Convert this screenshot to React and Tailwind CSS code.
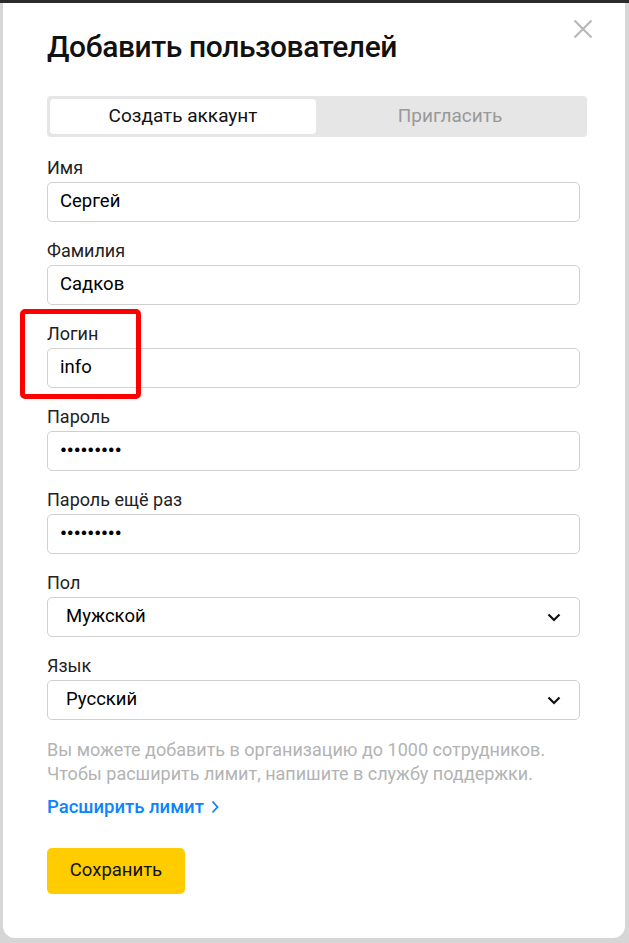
const font = { fontFamily: 'Roboto, "Noto Sans", sans-serif' }

function Field({ label, value, password }) {
    return (
        <div className="mt-[17px] first:mt-0">
            <div className="text-[18px] leading-6 text-[#222] mb-[2px]">{label}</div>
            <div className="h-10 border border-[#d0d0d0] rounded-[5px] flex items-center px-[12px] text-[18.5px] text-black">
                {password ? <span className="text-[19px] font-bold">{value}</span> : value}
            </div>
        </div>
    )
}

function Select({ label, value }) {
    return (
        <div className="mt-[17px]">
            <div className="text-[18px] leading-6 text-[#222] mb-[2px]">{label}</div>
            <div className="h-10 border border-[#d0d0d0] rounded-[5px] flex items-center justify-between pl-[18px] pr-[18px] text-[18.5px] text-black">
                <span>{value}</span>
                <svg width="14" height="9" viewBox="0 0 14 9" fill="none">
                    <path d="M1.5 1.5 L7 7 L12.5 1.5" stroke="#111" strokeWidth="2.2" />
                </svg>
            </div>
        </div>
    )
}

export default function App() {
    return (
        <div className="min-h-[943px] bg-[#d6d6d6] flex flex-col" style={font}>
            <div className="h-[3px] bg-[#2b2b2b]" />
            <div className="relative ml-[3px] mr-[4px] h-[935px] bg-white rounded-b-[12px] pl-[44px] pr-[38px]">
                <button className="absolute right-[32px] top-[16px]">
                    <svg width="20" height="20" viewBox="0 0 20 20" fill="none">
                        <path d="M1.5 1.5 L18.5 18.5 M18.5 1.5 L1.5 18.5" stroke="#b8b8b8" strokeWidth="2.2" />
                    </svg>
                </button>

                <h1 className="pt-[26px] text-[30px] leading-9 text-[#111] font-medium tracking-[-0.4px]">Добавить пользователей</h1>

                <div className="mt-[31px] h-[41px] bg-[#e6e6e6] rounded-[4px] p-[3px] flex text-[19px]">
                    <div className="w-[266px] bg-white rounded-[4px] flex items-center justify-center text-[#111]">Создать аккаунт</div>
                    <div className="flex-1 flex items-center justify-center text-[#999]">Пригласить</div>
                </div>

                <div className="mt-[19px] w-[533px]">
                    <Field label="Имя" value="Сергей" />
                    <Field label="Фамилия" value="Садков" />
                    <Field label="Логин" value="info" />
                    <Field label="Пароль" value="•••••••••" password />
                    <Field label="Пароль ещё раз" value="•••••••••" password />
                    <Select label="Пол" value="Мужской" />
                    <Select label="Язык" value="Русский" />
                </div>

                <p className="mt-[18px] text-[18px] leading-6 text-[#b3b3b3]">
                    Вы можете добавить в организацию до 1000 сотрудников.
                    <br />
                    Чтобы расширить лимит, напишите в службу поддержки.
                </p>

                <a className="mt-[9px] flex items-center gap-[7px] text-[18.5px] leading-6 text-[#0a84ff] font-medium">
                    Расширить лимит
                    <svg width="8" height="14" viewBox="0 0 8 14" fill="none">
                        <path d="M1.5 1.5 L6.5 7 L1.5 12.5" stroke="#0a84ff" strokeWidth="1.8" />
                    </svg>
                </a>

                <button className="mt-[29px] h-[46px] w-[138px] bg-[#ffcc00] rounded-[5px] text-[18.5px] text-[#111]">Сохранить</button>

                <div className="absolute left-[17px] top-[306px] w-[121px] h-[90px] border-[5px] border-[#ff0000] rounded-[5px]" />
            </div>
        </div>
    )
}
